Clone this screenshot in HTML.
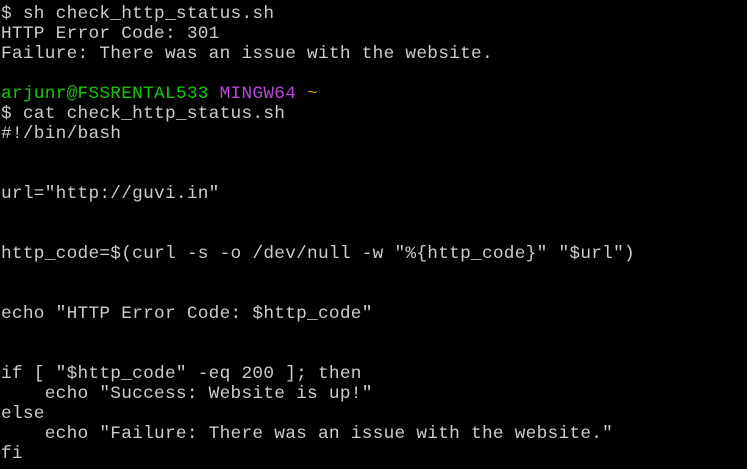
<!DOCTYPE html>
<html><head><meta charset="utf-8"><style>
html,body{margin:0;padding:0;background:#000;width:747px;height:469px;overflow:hidden}
pre{margin:0;position:absolute;left:1px;top:4px;font-family:"Liberation Mono",monospace;font-size:17.8px;letter-spacing:0.26px;line-height:20px;color:#cccccc;white-space:pre}
.g{color:#16c60c}.m{color:#b648d6}.y{color:#c19c00}
</style></head><body>
<pre>$ sh check_http_status.sh
HTTP Error Code: 301
Failure: There was an issue with the website.

<span class="g">arjunr@FSSRENTAL533</span> <span class="m">MINGW64</span> <span class="y">~</span>
$ cat check_http_status.sh
#!/bin/bash


url="http://guvi.in"


http_code=$(curl -s -o /dev/null -w "%{http_code}" "$url")


echo "HTTP Error Code: $http_code"


if [ "$http_code" -eq 200 ]; then
    echo "Success: Website is up!"
else
    echo "Failure: There was an issue with the website."
fi</pre>
</body></html>
